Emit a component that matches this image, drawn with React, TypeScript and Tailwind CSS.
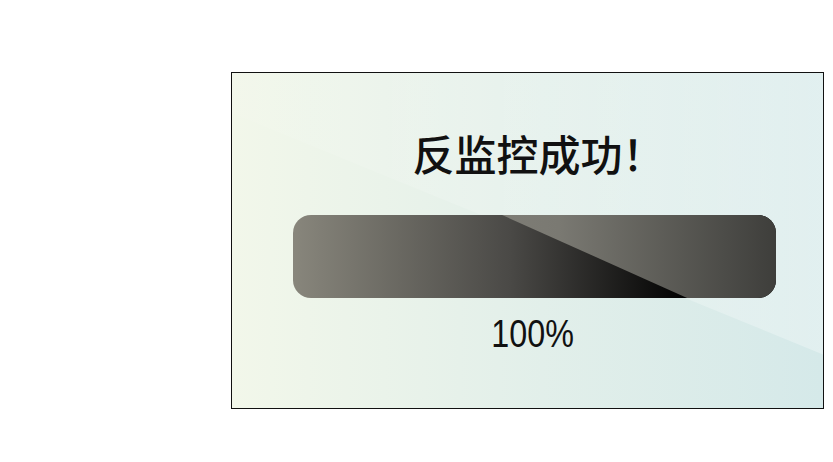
import React from "react";

export default function App() {
  return (
    <div className="min-h-[462px] w-full bg-white pl-[231px] pt-[72px]">
      <div className="relative flex h-[337px] w-[593px] flex-col items-center overflow-hidden border border-[#111] bg-[linear-gradient(to_right,#f2f7ea,#e4f0ea_45%,#d5e9e9)]">
        <div className="pointer-events-none absolute inset-0 bg-[linear-gradient(to_right,rgba(255,255,255,0.05),rgba(255,255,255,0.3))] [clip-path:polygon(0_0,100%_0,100%_84%,0_12%)]" />
        <h1
          className="relative ml-[22px] mt-[59px] text-[42px] font-medium leading-[42px] text-[#111]"
          style={{ fontFamily: '"Noto Sans CJK SC", "Noto Sans", sans-serif' }}
        >
          反监控成功！
        </h1>
        <div className="relative ml-[61px] mt-[41px] h-[83px] w-[483px] self-start overflow-hidden rounded-[18px] bg-[linear-gradient(to_right,#88867c,#4a4946_45%,#000_82%,#000)]">
          <div className="absolute inset-0 bg-[linear-gradient(to_right,#8e8c84,#7a7972_55%,#3e3e3b)] [clip-path:polygon(43.3%_0,100%_0,100%_100%,81.6%_100%)]" />
        </div>
        <div
          className="relative ml-[11px] mt-[17px] scale-x-[0.85] text-[38px] leading-[38px] text-[#111]"
          style={{ fontFamily: '"Liberation Sans", Arial, sans-serif' }}
        >
          100%
        </div>
      </div>
    </div>
  );
}
